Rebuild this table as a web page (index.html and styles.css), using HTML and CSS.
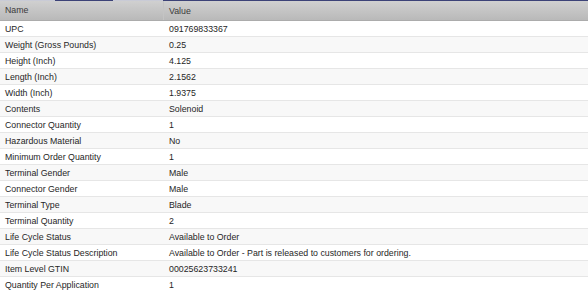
FILE: index.html
```html
<!DOCTYPE html>
<html>
<head>
<meta charset="utf-8">
<link rel="stylesheet" href="styles.css">
</head>
<body>
<div class="grid">
  <div class="topline">
    <span class="seg light s1"></span>
    <span class="seg dark s2"></span>
    <span class="seg light s3"></span>
    <span class="seg dark s4"></span>
  </div>
  <div class="head">
    <div class="cell name">Name</div>
    <div class="cell value">Value</div>
  </div>
  <div class="row"><div class="cell name">UPC</div><div class="cell value">091769833367</div></div>
  <div class="row"><div class="cell name">Weight (Gross Pounds)</div><div class="cell value">0.25</div></div>
  <div class="row"><div class="cell name">Height (Inch)</div><div class="cell value">4.125</div></div>
  <div class="row"><div class="cell name">Length (Inch)</div><div class="cell value">2.1562</div></div>
  <div class="row"><div class="cell name">Width (Inch)</div><div class="cell value">1.9375</div></div>
  <div class="row"><div class="cell name">Contents</div><div class="cell value">Solenoid</div></div>
  <div class="row"><div class="cell name">Connector Quantity</div><div class="cell value">1</div></div>
  <div class="row"><div class="cell name">Hazardous Material</div><div class="cell value">No</div></div>
  <div class="row"><div class="cell name">Minimum Order Quantity</div><div class="cell value">1</div></div>
  <div class="row"><div class="cell name">Terminal Gender</div><div class="cell value">Male</div></div>
  <div class="row"><div class="cell name">Connector Gender</div><div class="cell value">Male</div></div>
  <div class="row"><div class="cell name">Terminal Type</div><div class="cell value">Blade</div></div>
  <div class="row"><div class="cell name">Terminal Quantity</div><div class="cell value">2</div></div>
  <div class="row"><div class="cell name">Life Cycle Status</div><div class="cell value">Available to Order</div></div>
  <div class="row"><div class="cell name">Life Cycle Status Description</div><div class="cell value">Available to Order - Part is released to customers for ordering.</div></div>
  <div class="row"><div class="cell name">Item Level GTIN</div><div class="cell value">00025623733241</div></div>
  <div class="row"><div class="cell name">Quantity Per Application</div><div class="cell value">1</div></div>
</div>
</body>
</html>
```
FILE: styles.css
```css
html, body {
  margin: 0;
  padding: 0;
  background: #ffffff;
}
.grid {
  width: 588px;
  font-family: "Liberation Sans", Arial, sans-serif;
  font-size: 8.8px;
  color: #262626;
}
.topline {
  display: flex;
  height: 1px;
}
.seg { height: 1px; }
.seg.light { background: #c9cbd6; }
.seg.dark { background: #3c4277; }
.s1 { width: 55px; }
.s2 { width: 58px; }
.s3 { width: 50px; }
.s4 { flex: 1; }
.head {
  display: flex;
  height: 19px;
  align-items: center;
  background: linear-gradient(#d0d0d0, #b9b9b9);
  border-bottom: 1px solid #acacac;
  color: #3a3a3a;
}
.row {
  display: flex;
  height: 15px;
  align-items: center;
  border-bottom: 1px solid #e6e6e6;
}
.row:nth-child(even) {
  background: #f8f8f8;
}
.cell.name {
  width: 164px;
  padding-left: 5px;
  box-sizing: border-box;
}
.head .cell.name {
  border-right: 1px solid #c4c4c4;
  height: 19px;
  line-height: 19px;
}
.cell.value {
  padding-left: 5px;
  white-space: nowrap;
}
```
